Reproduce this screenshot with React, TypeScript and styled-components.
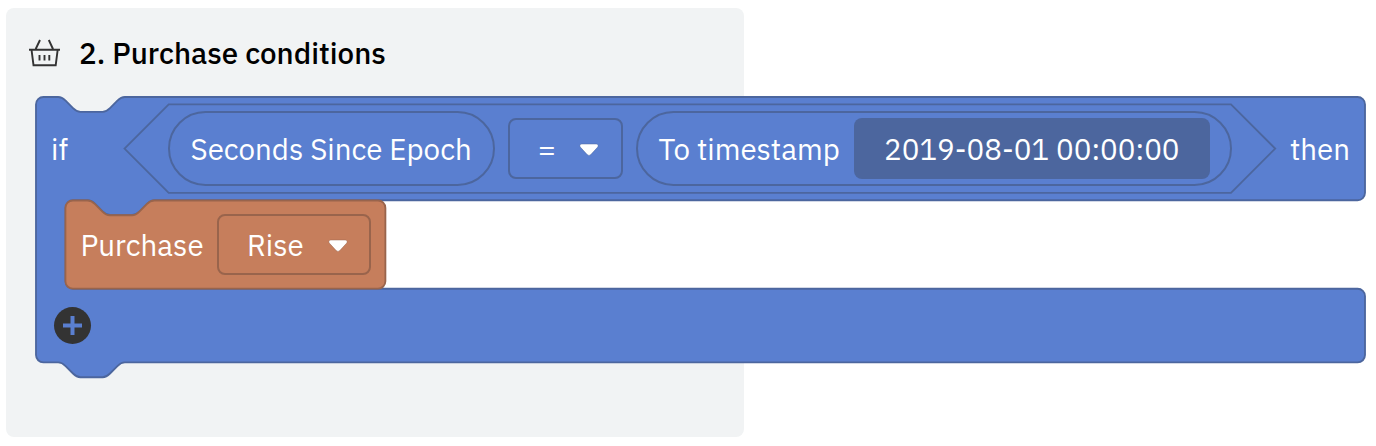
import React from "react";
import styled, { createGlobalStyle } from "styled-components";

const Global = createGlobalStyle`
  body { margin: 0; background: #fff; }
  * { box-sizing: border-box; }
`;

const Page = styled.main`
  width: 1376px;
  height: 446px;
  overflow: hidden;
  padding: 8px 0 0 5.5px;
  font-family: "IBM Plex Sans", Roboto, "Liberation Sans", sans-serif;
`;

const Panel = styled.section`
  width: 738.5px;
  height: 429px;
  border-radius: 8px;
  background: #f1f3f4;
`;

const Heading = styled.header`
  display: flex;
  align-items: center;
  height: 88px;
  padding: 2px 0 0 22.5px;
`;

const BasketIcon = styled.svg`
  width: 34px;
  height: 32px;
  margin: 1px 17px 0 0;
  flex: none;
`;

const Title = styled.h2`
  margin: 0;
  font-size: 29.5px;
  font-weight: 500;
  line-height: 36px;
  color: #000;
`;

const Text = styled.span<{ $width: number }>`
  flex: none;
  width: ${(p) => p.$width}px;
  font-size: 29.5px;
  line-height: 36px;
  font-weight: 400;
  color: #fff;
  white-space: nowrap;
`;

const Block = styled.div<{ $w: number; $h: number }>`
  display: grid;
  width: ${(p) => p.$w}px;
  height: ${(p) => p.$h}px;
  > * { grid-area: 1 / 1; }
`;

const Outline = styled.svg`
  width: 100%;
  height: 100%;
  overflow: visible;
`;

const IfBlock = styled(Block)`
  margin: 1px 0 0 30.5px;
`;

const Rows = styled.div`
  display: flex;
  flex-direction: column;
`;

const Row = styled.div<{ $h: number; $left?: number }>`
  display: flex;
  align-items: center;
  height: ${(p) => p.$h}px;
  padding-left: ${(p) => p.$left ?? 0}px;
`;

const HexRow = styled.div`
  display: flex;
  align-items: center;
  height: 88.8px;
  padding: 0 58px 0 44.5px;
`;

const Pill = styled.div<{ $w: number; $gap?: number }>`
  display: flex;
  align-items: center;
  flex: none;
  width: ${(p) => p.$w}px;
  height: 75px;
  margin-left: ${(p) => p.$gap ?? 0}px;
  padding-left: 20.5px;
  border: 2px solid #4c669e;
  border-radius: 38px;
`;

const Dropdown = styled.div<{ $w: number; $gap: number; $line: string }>`
  display: flex;
  align-items: center;
  flex: none;
  width: ${(p) => p.$w}px;
  height: 61px;
  margin-left: ${(p) => p.$gap}px;
  padding-left: 28px;
  border: 2px solid ${(p) => p.$line};
  border-radius: 8px;
`;

const Caret = styled.svg`
  width: 20px;
  height: 14px;
  margin-top: 3px;
  flex: none;
  overflow: visible;
`;

const Input = styled.div`
  display: flex;
  align-items: center;
  width: 356px;
  height: 61px;
  padding-left: 30px;
  border-radius: 8px;
  background: #4c669e;
`;

const AddButton = styled.button`
  display: flex;
  width: 37px;
  height: 37px;
  padding: 0;
  border: 0;
  border-radius: 50%;
  background: #333;
`;

const NOTCH = "c3.7 0 5.55 1.85 7.4 3.7l7.4 7.4c1.85 1.85 3.7 3.7 7.4 3.7h22.2c3.7 0 5.55 -1.85 7.4 -3.7l7.4 -7.4c1.85 -1.85 3.7 -3.7 7.4 -3.7";
const TAB = "c-3.7 0 -5.55 1.85 -7.4 3.7l-7.4 7.4c-1.85 1.85 -3.7 3.7 -7.4 3.7h-22.2c-3.7 0 -5.55 -1.85 -7.4 -3.7l-7.4 -7.4c-1.85 -1.85 -3.7 -3.7 -7.4 -3.7";

const IF_PATH = `M0 7.4a7.4 7.4 0 0 1 7.4 -7.4h14.8${NOTCH}H1321.6a7.4 7.4 0 0 1 7.4 7.4V95.8a7.4 7.4 0 0 1 -7.4 7.4H118.4${TAB}H37a7.4 7.4 0 0 0 -7.4 7.4V184.4a7.4 7.4 0 0 0 7.4 7.4H1321.6a7.4 7.4 0 0 1 7.4 7.4V258a7.4 7.4 0 0 1 -7.4 7.4H88.8${TAB}H7.4a7.4 7.4 0 0 1 -7.4 -7.4Z`;
const BUY_PATH = `M0 7.4a7.4 7.4 0 0 1 7.4 -7.4h14.8${NOTCH}H312.6a7.4 7.4 0 0 1 7.4 7.4V80.8a7.4 7.4 0 0 1 -7.4 7.4H7.4a7.4 7.4 0 0 1 -7.4 -7.4Z`;

function Arrow({ line }: { line: string }) {
  return (
    <Caret viewBox="0 0 20 14">
      <path
        d="M2.8 1h14.4c2 0 2.6 2 1.3 3.3l-6.7 7.3q-1.8 1.8-3.6 0L1.5 4.3C.2 3 .8 1 2.8 1Z"
        fill="#fff"
        stroke={line}
        strokeWidth="0.5"
      />
    </Caret>
  );
}

export default function App() {
  return (
    <>
      <Global />
      <Page>
        <Panel>
          <Heading>
            <BasketIcon viewBox="0 0 34 32" fill="none" stroke="#333" strokeWidth="1.9">
              <path d="M1 11.7h31M3.5 11.7l2 15.5h22.2l2-15.5M12 2L7.7 11M20.8 2L25 11M11.5 17v5.5M16.5 17v5.5M21.3 17v5.5" />
            </BasketIcon>
            <Title>2. Purchase conditions</Title>
          </Heading>
          <IfBlock $w={1329} $h={266}>
            <Outline>
              <rect x="29.6" y="103.2" width="1299.4" height="88.4" fill="#fff" />
              <path d={IF_PATH} fill="#5a7fd0" stroke="#4c669e" strokeWidth="1.85" />
              <path d="M88.5 51.6L132.7 7.4H1195L1239.2 51.6L1195 95.8H132.7Z" fill="none" stroke="#4c669e" strokeWidth="1.85" />
            </Outline>
            <Rows>
              <Row $h={103.4} $left={15}>
                <Text $width={72.5}>if</Text>
                <HexRow>
                  <Pill $w={327}>
                    <Text $width={282}>Seconds Since Epoch</Text>
                  </Pill>
                  <Dropdown $w={115} $gap={13} $line="#4c669e">
                    <Text $width={41}>=</Text>
                    <Arrow line="#4c669e" />
                  </Dropdown>
                  <Pill $w={596} $gap={13}>
                    <Text $width={195.5}>To timestamp</Text>
                    <Input>
                      <Text $width={300}>2019-08-01 00:00:00</Text>
                    </Input>
                  </Pill>
                </HexRow>
                <Text $width={64}>then</Text>
              </Row>
              <Row $h={88.6} $left={29.4}>
                <Block $w={320} $h={88.6}>
                  <Outline viewBox="-0.4 -0.5 320 88.6">
                    <path d={BUY_PATH} fill="#c67e5c" stroke="#99644c" strokeWidth="1.85" />
                  </Outline>
                  <Row $h={88.6} $left={15}>
                    <Text $width={124}>Purchase</Text>
                    <Dropdown $w={154} $gap={12.5} $line="#99644c">
                      <Text $width={81}>Rise</Text>
                      <Arrow line="#99644c" />
                    </Dropdown>
                  </Row>
                </Block>
              </Row>
              <Row $h={73.6} $left={18}>
                <AddButton aria-label="Add condition">
                  <svg width="37" height="37" viewBox="0 0 37 37" stroke="#5a7fd0" strokeWidth="4">
                    <path d="M18.5 9v19M9 18.5h19" />
                  </svg>
                </AddButton>
              </Row>
            </Rows>
          </IfBlock>
        </Panel>
      </Page>
    </>
  );
}
